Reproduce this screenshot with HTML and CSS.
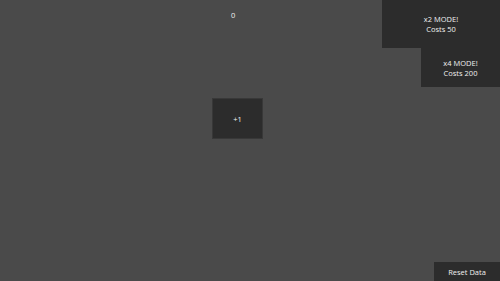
FILE: index.html
```html
<!DOCTYPE html>
<html>
<head>
<meta charset="utf-8">
<link rel="stylesheet" href="styles.css">
</head>
<body>
<div class="app">
  <div class="main">
    <div class="counter">0</div>
    <button class="btn click">+1</button>
  </div>
  <div class="side">
    <button class="btn mode x2">x2 MODE!<br>Costs 50</button>
    <button class="btn mode x4">x4 MODE!<br>Costs 200</button>
    <button class="btn reset">Reset Data</button>
  </div>
</div>
</body>
</html>
```
FILE: styles.css
```css
html, body {
  margin: 0;
  padding: 0;
  background: #4a4a4a;
  font-family: "Open Sans", "DejaVu Sans", sans-serif;
  color: #f0f0f0;
}
.app {
  display: flex;
  width: 500px;
  height: 281px;
}
.main {
  flex: 1;
  display: flex;
  flex-direction: column;
  align-items: flex-start;
}
.counter {
  font-size: 7.5px;
  line-height: 10px;
  margin-top: 10px;
  margin-left: 231px;
}
.btn {
  font-family: inherit;
  font-size: 7.5px;
  line-height: 10px;
  color: #f0f0f0;
  background: #2c2c2c;
  border: none;
  padding: 0;
  margin: 0;
  display: flex;
  align-items: center;
  justify-content: center;
  text-align: center;
}
.click {
  width: 51px;
  height: 41px;
  margin-top: 78px;
  margin-left: 212px;
  border: 1px solid #383838;
  box-sizing: border-box;
}
.side {
  display: flex;
  flex-direction: column;
  align-items: flex-end;
}
.x2 {
  width: 118px;
  height: 48px;
}
.x4 {
  width: 79px;
  height: 39px;
}
.reset {
  margin-top: auto;
  width: 66px;
  height: 19px;
}
```
